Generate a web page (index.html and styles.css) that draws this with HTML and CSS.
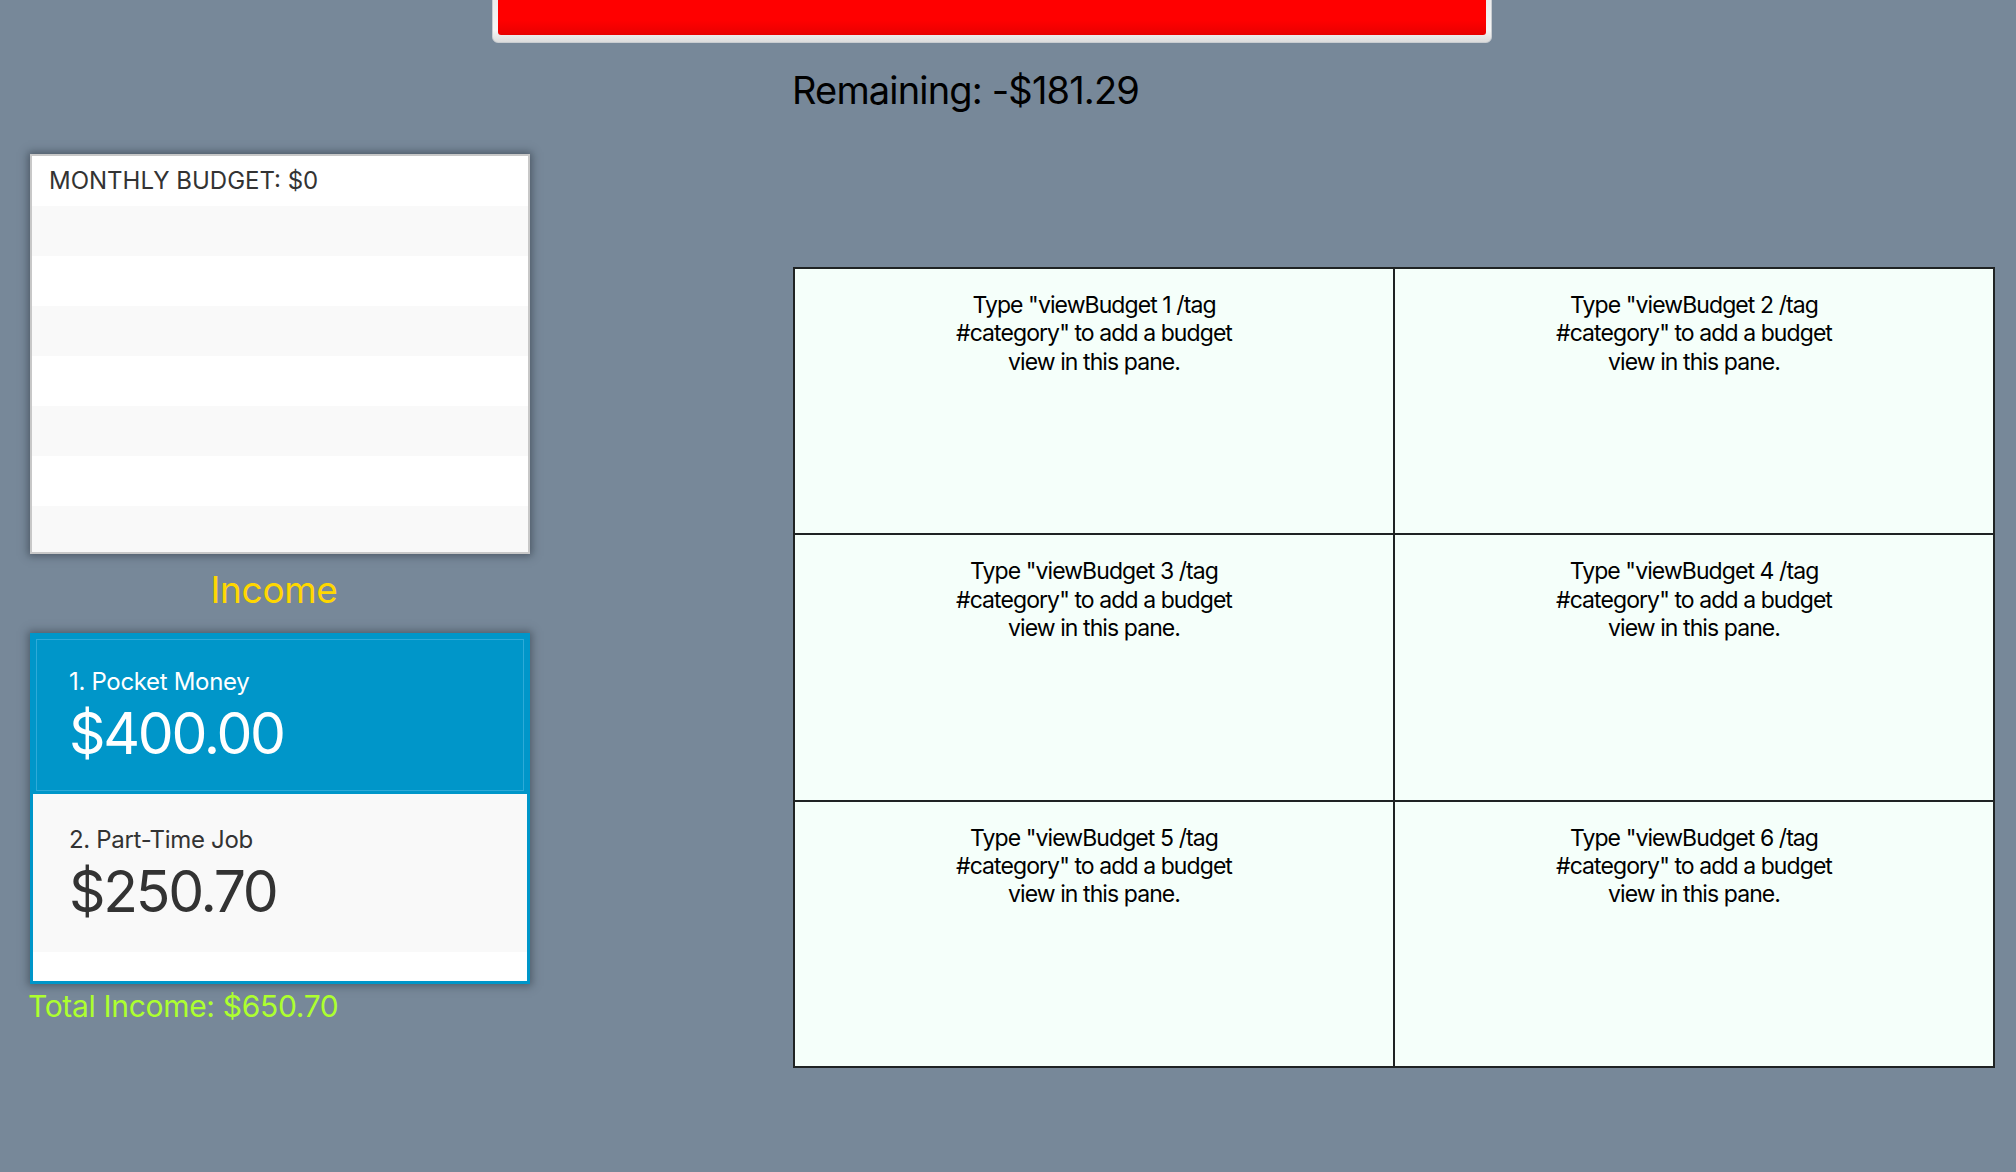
FILE: index.html
```html
<!DOCTYPE html>
<html lang="en">
<head>
<meta charset="utf-8">
<title>Budget</title>
<link rel="stylesheet" href="styles.css">
</head>
<body>
<div class="top">
  <div class="progress"><div class="progress-fill"></div></div>
  <div class="remaining">Remaining: -$181.29</div>
</div>
<div class="main">
  <aside class="side">
    <div class="budget-box">
      <div class="budget-row header">MONTHLY BUDGET: $0</div>
      <div class="budget-row odd"></div>
      <div class="budget-row"></div>
      <div class="budget-row odd"></div>
      <div class="budget-row"></div>
      <div class="budget-row odd"></div>
      <div class="budget-row"></div>
      <div class="budget-row odd"></div>
    </div>
    <div class="income-title">Income</div>
    <div class="income-box">
      <div class="income-cell selected">
        <div class="income-name">1. Pocket Money</div>
        <div class="income-amount">$400.00</div>
      </div>
      <div class="income-cell odd">
        <div class="income-name">2. Part-Time Job</div>
        <div class="income-amount">$250.70</div>
      </div>
    </div>
    <div class="total-income">Total Income: $650.70</div>
  </aside>
  <section class="panes">
    <div class="pane"><p>Type "viewBudget 1 /tag #category" to add a budget view in this pane.</p></div>
    <div class="pane"><p>Type "viewBudget 2 /tag #category" to add a budget view in this pane.</p></div>
    <div class="pane"><p>Type "viewBudget 3 /tag #category" to add a budget view in this pane.</p></div>
    <div class="pane"><p>Type "viewBudget 4 /tag #category" to add a budget view in this pane.</p></div>
    <div class="pane"><p>Type "viewBudget 5 /tag #category" to add a budget view in this pane.</p></div>
    <div class="pane"><p>Type "viewBudget 6 /tag #category" to add a budget view in this pane.</p></div>
  </section>
</div>
</body>
</html>
```
FILE: styles.css
```css
* { box-sizing: border-box; }

html, body {
  margin: 0;
  padding: 0;
}

body {
  background: #778899;
  font-family: Inter, "Noto Sans", "Liberation Sans", sans-serif;
  letter-spacing: -0.02em;
  width: 2016px;
  height: 1172px;
  overflow: hidden;
}

.top {
  display: flex;
  flex-direction: column;
}

.progress {
  margin-top: -20px;
  margin-left: 492px;
  width: 1000px;
  height: 63px;
  border-radius: 6px;
  border: 1px solid #c9cdd1;
  background: linear-gradient(#e6e6e6, #f6f6f6 80%, #dcdcdc);
  padding: 5px 5px 7px 5px;
}

.progress-fill {
  height: 100%;
  border-radius: 3px;
  background: linear-gradient(#ff0000, #ff0000 70%, #e80000);
}

.remaining {
  margin-top: 24px;
  margin-left: 792px;
  font-size: 38px;
  line-height: 46px;
  letter-spacing: -0.022em;
  color: #000;
}

.main {
  display: flex;
  margin-top: 41px;
  padding-left: 30px;
  gap: 263px;
  align-items: flex-start;
}

.side {
  width: 500px;
  display: flex;
  flex-direction: column;
}

.budget-box {
  height: 400px;
  border: 2px solid #c8c8c8;
  background: #fff;
  overflow: hidden;
  box-shadow: 0 0 8px 2px rgba(40, 50, 60, 0.55);
}

.budget-row {
  height: 50px;
  flex: none;
  background: #fff;
}

.budget-row.odd {
  background: #f9f9f9;
}

.budget-row.header {
  padding-left: 17px;
  font-size: 24px;
  line-height: 50px;
  letter-spacing: 0;
  color: #333;
}

.income-title {
  margin-top: 13px;
  padding-right: 12px;
  text-align: center;
  font-size: 37px;
  line-height: 45px;
  color: #ffd700;
}

.income-box {
  margin-top: 21px;
  height: 351px;
  border: 3px solid #0096c9;
  background: #fff;
  box-shadow: 0 0 8px 2px rgba(40, 50, 60, 0.5);
}

.income-cell {
  height: 158px;
  padding: 31px 0 0 36px;
  color: #333;
}

.income-cell.odd {
  background: #f9f9f9;
}

.income-cell.selected {
  background: #0096c9;
  color: #fff;
  box-shadow: inset 0 0 0 3px #0096c9, inset 0 0 0 4px #2eaad8;
}

.income-name {
  font-size: 24px;
  line-height: 29px;
}

.income-amount {
  margin-top: 3px;
  font-size: 57px;
  line-height: 70px;
  letter-spacing: -0.04em;
}

.total-income {
  margin-top: 4px;
  margin-left: -2px;
  font-size: 30px;
  line-height: 36px;
  color: #adff2f;
}

.panes {
  margin-top: 113px;
  width: 1202px;
  height: 801px;
  display: grid;
  grid-template-columns: 1fr 1fr;
  grid-template-rows: 1fr 1fr 1fr;
  gap: 2px;
  padding: 2px;
  background: #1f2323;
}

.pane {
  background: #f5fffa;
  padding-top: 22px;
}

.pane p {
  margin: 0 auto;
  max-width: 300px;
  text-align: center;
  font-size: 23px;
  line-height: 28.3px;
  letter-spacing: -0.04em;
  color: #000;
}
```
